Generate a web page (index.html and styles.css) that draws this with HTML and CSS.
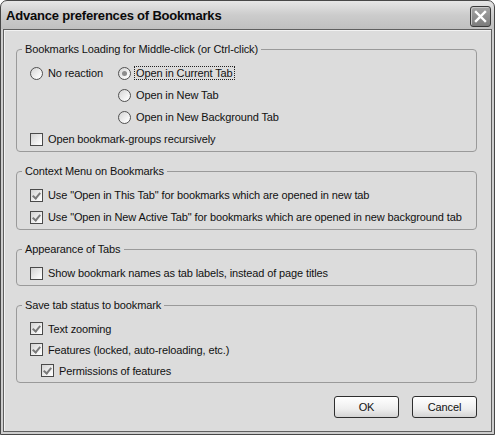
FILE: index.html
```html
<!DOCTYPE html>
<html>
<head>
<meta charset="utf-8">
<title>Advance preferences of Bookmarks</title>
<link rel="stylesheet" href="styles.css">
</head>
<body>
<div class="window">
  <div class="titlebar">
    <span class="title">Advance preferences of Bookmarks</span>
    <span class="close">
      <svg width="21" height="21" viewBox="0 0 21 21">
        <path d="M6 6 L15 15 M15 6 L6 15" stroke="#ffffff" stroke-width="2.4" stroke-linecap="square" fill="none"/>
      </svg>
    </span>
  </div>
  <div class="frame">
    <div class="content">
      <fieldset class="group">
        <legend>Bookmarks Loading for Middle-click (or Ctrl-click)</legend>
        <div class="body">
          <div class="radio-grid">
            <label class="opt"><span class="radio"></span><span class="lbl">No reaction</span></label>
            <label class="opt"><span class="radio on"></span><span class="lbl focus">Open in Current Tab</span></label>
            <label class="opt col2"><span class="radio"></span><span class="lbl">Open in New Tab</span></label>
            <label class="opt col2"><span class="radio"></span><span class="lbl">Open in New Background Tab</span></label>
          </div>
          <label class="opt"><span class="check"></span><span class="lbl">Open bookmark-groups recursively</span></label>
        </div>
      </fieldset>

      <fieldset class="group">
        <legend>Context Menu on Bookmarks</legend>
        <div class="body">
          <label class="opt"><span class="check on"></span><span class="lbl">Use "Open in This Tab" for bookmarks which are opened in new tab</span></label>
          <label class="opt"><span class="check on"></span><span class="lbl">Use "Open in New Active Tab" for bookmarks which are opened in new background tab</span></label>
        </div>
      </fieldset>

      <fieldset class="group">
        <legend>Appearance of Tabs</legend>
        <div class="body">
          <label class="opt"><span class="check"></span><span class="lbl">Show bookmark names as tab labels, instead of page titles</span></label>
        </div>
      </fieldset>

      <fieldset class="group compact">
        <legend>Save tab status to bookmark</legend>
        <div class="body">
          <label class="opt"><span class="check on"></span><span class="lbl">Text zooming</span></label>
          <label class="opt"><span class="check on"></span><span class="lbl">Features (locked, auto-reloading, etc.)</span></label>
          <label class="opt sub"><span class="check on"></span><span class="lbl">Permissions of features</span></label>
        </div>
      </fieldset>

      <div class="buttons">
        <button class="btn">OK</button>
        <button class="btn">Cancel</button>
      </div>
    </div>
  </div>
</div>
</body>
</html>
```

FILE: styles.css
```css
* { box-sizing: border-box; }

html, body {
  margin: 0;
  padding: 0;
  background: #ffffff;
}

body {
  font-family: "Liberation Sans", Arial, sans-serif;
  font-size: 11px;
  letter-spacing: -0.12px;
  color: #111111;
}

.window {
  width: 495px;
  height: 435px;
  border: 1px solid #474747;
  border-radius: 7px 7px 0 0;
  background: linear-gradient(to bottom, #e6e6e6 0px, #cccccc 14px, #c0c0c0 28px);
  display: flex;
  flex-direction: column;
  overflow: hidden;
}

.titlebar {
  height: 28px;
  flex: none;
  display: flex;
  align-items: center;
  justify-content: space-between;
  padding: 0 3px 0 5px;
}

.title {
  font-weight: bold;
  font-size: 13px;
  letter-spacing: -0.2px;
  color: #0a0a0a;
}

.close {
  width: 21px;
  height: 21px;
  border: 1px solid #3a3a3a;
  border-radius: 3px;
  background: linear-gradient(to bottom, #a4a4a4, #7c7c7c);
  box-shadow: inset 1px 1px 0 #c8c8c8;
  display: flex;
  align-items: center;
  justify-content: center;
  margin-top: 3px;
}

.close svg {
  display: block;
  margin: -1px;
}

.frame {
  flex: 1;
  min-height: 0;
  background: #cdcdcd;
  padding: 0 2px 2px 2px;
  display: flex;
}

.content {
  flex: 1;
  min-width: 0;
  background: #dcdcdc;
  border: 1px solid #5f5f5f;
  box-shadow: inset 1px 1px 0 #f2f2f2;
  padding: 12px 14px 0 12px;
  display: flex;
  flex-direction: column;
}

.group {
  margin: 0 0 12px 0;
  padding: 0;
  border: 1px solid #9a9a9a;
  border-radius: 4px;
  min-width: 0;
}

.group legend {
  margin-left: 5px;
  padding: 0 3px;
  line-height: 14px;
  color: #111111;
}

.body {
  padding: 6px 12px 1px 13px;
  display: flex;
  flex-direction: column;
}

.radio-grid {
  display: grid;
  grid-template-columns: 88px auto;
}

.col2 {
  grid-column: 2;
}

.opt {
  height: 22px;
  display: flex;
  align-items: center;
  gap: 3px;
  white-space: nowrap;
}

.compact .opt {
  height: 21px;
}

.opt.sub {
  margin-left: 11px;
}

.lbl {
  border: 1px dotted transparent;
  padding: 0 1px;
  line-height: 12px;
}

.lbl.focus {
  border-color: #222222;
}

.radio {
  width: 13px;
  height: 13px;
  flex: none;
  border-radius: 50%;
  border: 1px solid #505050;
  background: linear-gradient(135deg, #d4d4d4, #f6f6f6 70%, #ffffff);
  position: relative;
}

.radio.on::after {
  content: "";
  position: absolute;
  left: 3px;
  top: 3px;
  width: 5px;
  height: 5px;
  border-radius: 50%;
  background: #8c8c8c;
}

.check {
  width: 13px;
  height: 13px;
  flex: none;
  border: 1px solid #4a4a4a;
  background: linear-gradient(135deg, #d2d2d2, #f4f4f4 70%, #ffffff);
  position: relative;
}

.check.on::after {
  content: "";
  position: absolute;
  left: 3px;
  top: 1px;
  width: 3px;
  height: 6px;
  border: solid #7a7a7a;
  border-width: 0 2px 2px 0;
  transform: rotate(40deg);
}

.buttons {
  display: flex;
  justify-content: flex-end;
  gap: 13px;
  margin-top: 1px;
}

.btn {
  width: 65px;
  height: 22px;
  border: 1px solid #2e2e2e;
  border-radius: 3px;
  background: linear-gradient(to bottom, #ffffff, #eeeeee 60%, #d4d4d4);
  font-family: "Liberation Sans", Arial, sans-serif;
  font-size: 11px;
  letter-spacing: -0.12px;
  color: #111111;
  padding: 0;
}
```
